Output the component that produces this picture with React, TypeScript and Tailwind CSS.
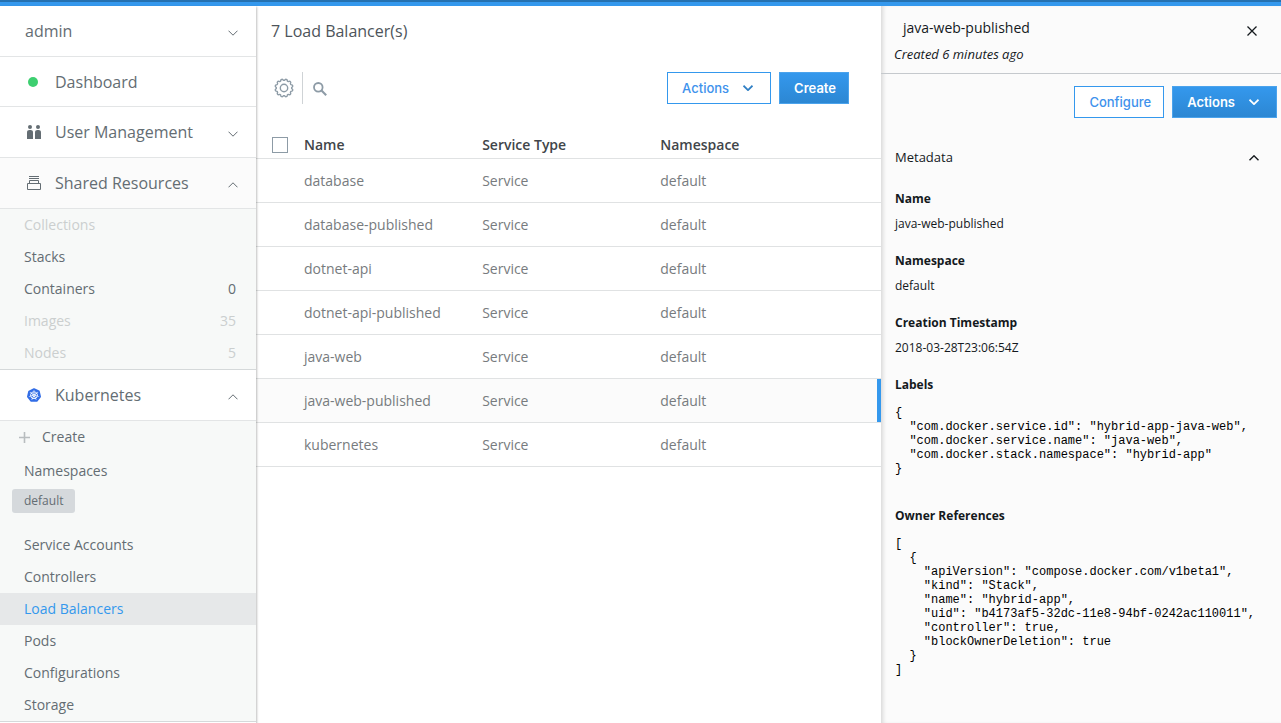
import React from "react";
import { SiKubernetes } from "react-icons/si";

type ChevronProps = { up?: boolean; className: string; strokeWidth?: number };

function Chevron({ up = false, className, strokeWidth = 1 }: ChevronProps) {
  return (
    <svg viewBox="0 0 10 6" fill="none" stroke="currentColor" strokeWidth={strokeWidth} className={className} aria-hidden="true">
      <path d={up ? "M0.5 5.3 L5 0.8 L9.5 5.3" : "M0.5 0.7 L5 5.2 L9.5 0.7"} />
    </svg>
  );
}

function UsersIcon() {
  return (
    <svg viewBox="0 0 14 14" fill="currentColor" className="h-3.5 w-3.5" aria-hidden="true">
      <circle cx="3" cy="2" r="2" />
      <circle cx="11" cy="2" r="2" />
      <path d="M0 14V7.2C0 5.8 1 5 2.4 5H3.6C5 5 6 5.8 6 7.2V14Z" />
      <path d="M8 14V7.2C8 5.8 9 5 10.4 5H11.6C13 5 14 5.8 14 7.2V14Z" />
    </svg>
  );
}

function ResourcesIcon() {
  return (
    <svg viewBox="0 0 14 14" fill="none" stroke="currentColor" className="h-3.5 w-3.5" aria-hidden="true">
      <path d="M2 0.5H12M2 2.5H12M2.5 7.5V4.5H11.5V7.5M0.5 7.5H13.5V13.5H0.5Z" />
    </svg>
  );
}

const GEAR_PATH =
  Array.from({ length: 144 }, (_, i) => {
    const a = (i / 144) * Math.PI * 2;
    const r = 8.3 + 0.7 * Math.tanh(1.6 * Math.cos((a + Math.PI / 12) * 12));
    return `${i === 0 ? "M" : "L"}${(10 + r * Math.sin(a)).toFixed(2)} ${(10 - r * Math.cos(a)).toFixed(2)}`;
  }).join("") + "Z";

function GearIcon() {
  return (
    <svg viewBox="0 0 20 20" fill="none" stroke="currentColor" strokeWidth="1.4" className="h-5 w-5" aria-hidden="true">
      <path d={GEAR_PATH} />
      <circle cx="10" cy="10" r="3.7" />
    </svg>
  );
}

function SearchIcon() {
  return (
    <svg viewBox="0 0 14 14" fill="none" stroke="currentColor" strokeWidth="1.8" className="h-3.5 w-3.5" aria-hidden="true">
      <circle cx="5.3" cy="5.3" r="4.3" />
      <path d="M8.5 8.5 L13.2 13.2" strokeWidth="2.1" />
    </svg>
  );
}

type SectionProps = { label: string; icon?: React.ReactNode; arrow?: "up" | "down"; className: string };

function Section({ label, icon, arrow, className }: SectionProps) {
  return (
    <button type="button" className={`flex w-full items-center border-b border-[#e3e5e6] pr-[18px] pl-[25px] text-left text-base ${className}`}>
      {icon && <span className="flex w-[30px] shrink-0 items-center">{icon}</span>}
      <span className="flex-1">{label}</span>
      {arrow && <Chevron up={arrow === "up"} className="mt-1 h-1.5 w-2.5" />}
    </button>
  );
}

type NavItemProps = { label: string; count?: number; muted?: boolean; active?: boolean };

function NavItem({ label, count, muted, active }: NavItemProps) {
  const tone = muted ? "text-[#cbcfcf]" : active ? "bg-[#e6e8e9] text-[#3498ed]" : "";
  return (
    <li>
      <a href="#" aria-current={active ? "page" : undefined} className={`flex h-8 items-center justify-between pr-5 pl-6 text-sm ${tone}`}>
        <span>{label}</span>
        {count !== undefined && <span>{count}</span>}
      </a>
    </li>
  );
}

function Sidebar() {
  return (
    <nav className="relative z-10 flex w-64 shrink-0 flex-col bg-white text-[#646d73] shadow-[1px_1px_2px_rgba(0,0,0,0.25)]">
      <Section label="admin" arrow="down" className="h-[51px]" />
      <Section
        label="Dashboard"
        className="h-[50px]"
        icon={<span className="ml-[3px] h-2.5 w-2.5 rounded-full bg-[#3dcf70]" />}
      />
      <Section label="User Management" arrow="down" className="h-[51px]" icon={<span className="ml-0.5"><UsersIcon /></span>} />
      <Section label="Shared Resources" arrow="up" className="h-[51px] bg-[#fbfbfb]" icon={<span className="ml-0.5"><ResourcesIcon /></span>} />
      <ul className="border-b border-[#d5d9da] bg-[#f7f9f8]">
        <NavItem label="Collections" muted />
        <NavItem label="Stacks" />
        <NavItem label="Containers" count={0} />
        <NavItem label="Images" count={35} muted />
        <NavItem label="Nodes" count={5} muted />
      </ul>
      <Section
        label="Kubernetes"
        arrow="up"
        className="h-[51px]"
        icon={<SiKubernetes className="ml-0.5 h-3.5 w-3.5 text-[#326de6]" />}
      />
      <div className="border-b border-[#d5d9da] bg-[#f7f9f8]">
        <a href="#" className="flex h-8 items-center gap-3 pl-[19px] text-sm">
          <svg viewBox="0 0 11 11" stroke="#b8bdbf" strokeWidth="1.6" className="h-[11px] w-[11px]" aria-hidden="true">
            <path d="M5.5 0V11M0 5.5H11" />
          </svg>
          Create
        </a>
        <a href="#" className="mt-0.5 flex h-8 items-center pl-6 text-sm">Namespaces</a>
        <div className="mt-0.5 mb-4 pl-3">
          <button type="button" className="flex h-6 items-center rounded-[3px] bg-[#d5d9dc] px-3 text-xs">default</button>
        </div>
        <ul>
          <NavItem label="Service Accounts" />
          <NavItem label="Controllers" />
          <NavItem label="Load Balancers" active />
          <NavItem label="Pods" />
          <NavItem label="Configurations" />
          <NavItem label="Storage" />
        </ul>
      </div>
    </nav>
  );
}

type ButtonProps = { label: string; primary?: boolean; menu?: boolean };

function Button({ label, primary, menu }: ButtonProps) {
  const tone = primary
    ? "border-[#4ba3ec] bg-linear-to-b from-[#3498ed] to-[#2c87d3] font-semibold text-white"
    : "border-[#3498ed] bg-white font-medium text-[#3e92ec]";
  return (
    <button type="button" className={`flex h-8 items-center gap-3.5 border pl-3.5 font-['Inter',sans-serif] text-[13px] whitespace-nowrap ${menu ? "pr-[17px]" : "pr-3"} ${tone}`}>
      <span className="pt-0.5">{label}</span>
      {menu && <Chevron strokeWidth={1.7} className={primary ? "h-1.5 w-2.5" : "h-1.5 w-2.5 text-[#2f7fc4]"} />}
    </button>
  );
}

const SERVICES = [
  "database",
  "database-published",
  "dotnet-api",
  "dotnet-api-published",
  "java-web",
  "java-web-published",
  "kubernetes",
];
const SELECTED = "java-web-published";

function LoadBalancers() {
  return (
    <main className="min-w-0 flex-1 bg-white">
      <h1 className="flex h-[50px] items-center pl-[15px] text-base text-[#4d545a]">{SERVICES.length} Load Balancer(s)</h1>
      <div className="mt-4 flex items-center justify-between pr-8 pl-[18px]">
        <div className="flex h-8 items-center text-[#8d9ba6]">
          <button type="button" aria-label="Settings"><GearIcon /></button>
          <span className="mr-2.5 ml-2 h-8 w-px bg-[#cfd3d6]" />
          <button type="button" aria-label="Search" className="pt-0.5"><SearchIcon /></button>
        </div>
        <div className="flex gap-2">
          <Button label="Actions" menu />
          <Button label="Create" primary />
        </div>
      </div>
      <table className="mt-[27px] w-full table-fixed border-separate border-spacing-0 text-left text-sm">
        <colgroup>
          <col className="w-12" />
          <col className="w-[28.5%]" />
          <col className="w-[28.5%]" />
          <col />
        </colgroup>
        <thead>
          <tr className="h-7 text-[#414549] *:border-b *:border-[#e0e2e3]">
            <th className="pl-4">
              <input type="checkbox" aria-label="Select all" className="block h-4 w-4 appearance-none border border-[#8d9ba6] bg-white" />
            </th>
            <th className="font-semibold">Name</th>
            <th className="font-semibold">Service Type</th>
            <th className="font-semibold">Namespace</th>
          </tr>
        </thead>
        <tbody>
          {SERVICES.map((name) => (
            <tr
              key={name}
              className={`h-11 text-[#777b7e] *:border-b *:border-[#e0e2e3] ${name === SELECTED ? "bg-[#fbfbfb] shadow-[inset_-4px_0_0_#3498ed]" : ""}`}
            >
              <td />
              <td>{name}</td>
              <td>Service</td>
              <td>default</td>
            </tr>
          ))}
        </tbody>
      </table>
    </main>
  );
}

const LABELS = `{
  "com.docker.service.id": "hybrid-app-java-web",
  "com.docker.service.name": "java-web",
  "com.docker.stack.namespace": "hybrid-app"
}`;

const OWNERS = `[
  {
    "apiVersion": "compose.docker.com/v1beta1",
    "kind": "Stack",
    "name": "hybrid-app",
    "uid": "b4173af5-32dc-11e8-94bf-0242ac110011",
    "controller": true,
    "blockOwnerDeletion": true
  }
]`;

function Field({ label, value }: { label: string; value: string }) {
  return (
    <div className="mb-[21px]">
      <dt className="leading-4 font-bold">{label}</dt>
      <dd className="mt-[9px] leading-4">{value}</dd>
    </div>
  );
}

function JsonField({ label, value }: { label: string; value: string }) {
  return (
    <div className="mb-8">
      <dt className="leading-4 font-bold">{label}</dt>
      <dd className="mt-[13px]">
        <pre className="font-['Liberation_Mono',monospace] leading-[14px] text-black">{value}</pre>
      </dd>
    </div>
  );
}

function Details() {
  return (
    <aside className="w-[400px] shrink-0 bg-[#fbfbfb] text-xs text-[#14191d] shadow-[inset_4px_0_4px_-2px_rgba(0,0,0,0.14)]">
      <header className="flex h-[68px] items-start justify-between border-b border-[#c5c9cd] pt-3 pr-6 pl-[13px]">
        <div>
          <h2 className="pl-[9px] text-sm leading-5">java-web-published</h2>
          <p className="mt-2 text-[13px] leading-4 italic">Created 6 minutes ago</p>
        </div>
        <button type="button" aria-label="Close" className="mt-2">
          <svg viewBox="0 0 10 10" stroke="currentColor" strokeWidth="1.3" className="h-2.5 w-2.5" aria-hidden="true">
            <path d="M0.5 0.5L9.5 9.5M9.5 0.5L0.5 9.5" />
          </svg>
        </button>
      </header>
      <div className="flex justify-end gap-2 pt-3 pr-1">
        <Button label="Configure" />
        <Button label="Actions" primary menu />
      </div>
      <section className="pt-[31px] pl-3.5">
        <button type="button" className="flex w-full items-center justify-between pr-[22px] text-[13px] leading-4">
          Metadata
          <Chevron up strokeWidth={1.4} className="mt-0.5 h-1.5 w-2.5" />
        </button>
        <dl className="mt-[26px]">
          <Field label="Name" value="java-web-published" />
          <Field label="Namespace" value="default" />
          <Field label="Creation Timestamp" value="2018-03-28T23:06:54Z" />
          <JsonField label="Labels" value={LABELS} />
          <JsonField label="Owner References" value={OWNERS} />
        </dl>
      </section>
    </aside>
  );
}

export default function App() {
  return (
    <div className="flex min-h-screen flex-col bg-white font-['Open_Sans',sans-serif]">
      <div className="h-1.5 shrink-0 border-t-2 border-[#2571b0] bg-[#3498ed]" />
      <div className="flex flex-1">
        <Sidebar />
        <LoadBalancers />
        <Details />
      </div>
    </div>
  );
}
